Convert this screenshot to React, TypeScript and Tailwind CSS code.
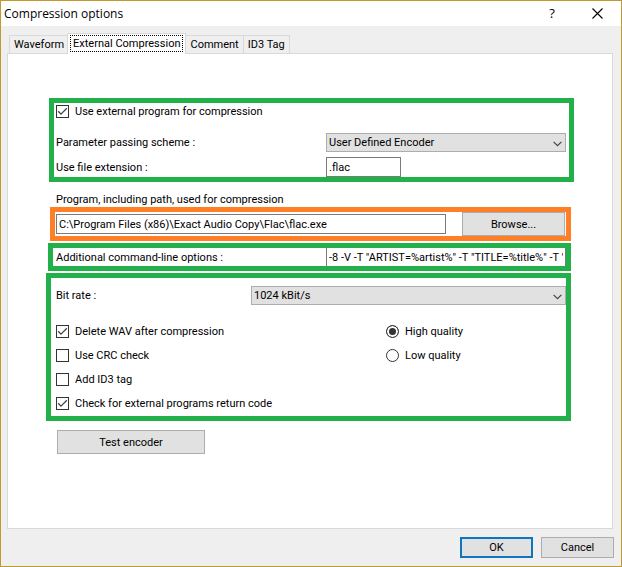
import { useState } from "react";
import type { ReactNode } from "react";

const TABS = ["Waveform", "External Compression", "Comment", "ID3 Tag"];

const OPTIONS = [
  { id: "delete-wav", label: "Delete WAV after compression", checked: true },
  { id: "crc", label: "Use CRC check", checked: false },
  { id: "id3", label: "Add ID3 tag", checked: false },
  { id: "return-code", label: "Check for external programs return code", checked: true },
];

const QUALITIES = [
  { value: "high", label: "High quality" },
  { value: "low", label: "Low quality" },
];

function Checkbox({ id, label, checked }: { id: string; label: string; checked: boolean }) {
  return (
    <div className="flex items-center gap-1.5">
      <span className="relative size-[13px] shrink-0">
        <input
          id={id}
          type="checkbox"
          defaultChecked={checked}
          className="peer block size-[13px] appearance-none border border-[#333333] bg-white"
        />
        <svg
          viewBox="0 0 13 13"
          className="pointer-events-none absolute inset-0 hidden size-[13px] peer-checked:block"
          fill="none"
          stroke="#444444"
          strokeWidth="1.3"
        >
          <path d="M2.2 6.3 5 9.1 10.8 3.3" />
        </svg>
      </span>
      <label htmlFor={id}>{label}</label>
    </div>
  );
}

function Select({ id, children }: { id: string; children: ReactNode }) {
  return (
    <div className="relative h-[19px] min-w-0 flex-1">
      <select
        id={id}
        className="block h-full w-full appearance-none border border-[#adadad] bg-[#e1e1e1] pr-5 pl-0.5 leading-[17px]"
      >
        {children}
      </select>
      <svg
        viewBox="0 0 9 6"
        className="pointer-events-none absolute top-2 right-1 h-1.5 w-[9px]"
        fill="none"
        stroke="#444444"
        strokeWidth="1.2"
      >
        <path d="M0.6 0.8 4.5 4.7 8.4 0.8" />
      </svg>
    </div>
  );
}

export default function App() {
  const [tab, setTab] = useState("External Compression");

  return (
    <div className="flex min-h-screen flex-col border border-[#c09a30] bg-[#efefef] font-['Roboto','Liberation_Sans',sans-serif] text-[11px] leading-[15px] text-black">
      <header className="flex h-[25px] items-center bg-white pr-[18px] pl-[3px]">
        <h1 className="flex-1 font-['Open_Sans',sans-serif] text-[12px]">Compression options</h1>
        <button
          type="button"
          aria-label="Help"
          className="mr-[33px] w-3 text-center font-['Open_Sans',sans-serif] text-[13px] font-medium"
        >
          ?
        </button>
        <button type="button" aria-label="Close" className="flex size-3 items-center justify-center">
          <svg viewBox="0 0 11 11" className="size-[11px]" fill="none" stroke="#000000" strokeWidth="1.1">
            <path d="M0.5 0.5 10.5 10.5M10.5 0.5 0.5 10.5" />
          </svg>
        </button>
      </header>

      <div role="tablist" className="flex h-[27px] items-end pl-2">
        {TABS.map((name) => (
          <button
            key={name}
            type="button"
            role="tab"
            aria-selected={tab === name}
            onClick={() => setTab(name)}
            className={
              tab === name
                ? "relative z-10 -mx-px -mb-px h-[21px] border border-b-0 border-[#d9d9d9] bg-white px-0.5 pb-0.5"
                : "-mr-px h-[18px] border border-b-0 border-[#d9d9d9] px-1"
            }
          >
            <span className={tab === name ? "block border border-dotted border-black px-0.5" : ""}>{name}</span>
          </button>
        ))}
      </div>

      <main className="mr-2 ml-1.5 flex-1 border border-[#d9d9d9] bg-white px-[38px] pt-11 pb-6">
        <section className="ml-[3px] border-5 border-[#22b04b] pr-[3px] pl-0.5">
          <div className="flex h-[17px] items-center">
            <Checkbox id="use-external" label="Use external program for compression" checked />
          </div>
          <div className="mt-[13px] flex items-center">
            <label htmlFor="scheme" className="w-[270px]">
              Parameter passing scheme :
            </label>
            <Select id="scheme">
              <option>User Defined Encoder</option>
            </Select>
          </div>
          <div className="mt-[5px] flex h-5 items-center">
            <label htmlFor="extension" className="w-[270px]">
              Use file extension :
            </label>
            <input
              id="extension"
              defaultValue=".flac"
              className="h-5 w-[75px] border border-[#7a7a7a] bg-white px-0.5"
            />
          </div>
        </section>

        <label htmlFor="program" className="mt-2.5 ml-2.5 block">
          Program, including path, used for compression
        </label>
        <section className="mr-[3px] ml-1 flex h-[34px] items-center border-5 border-[#ff7f27] px-px">
          <input
            id="program"
            defaultValue="C:\Program Files (x86)\Exact Audio Copy\Flac\flac.exe"
            className="h-5 min-w-0 flex-1 border border-[#7a7a7a] bg-white px-0.5"
          />
          <button type="button" className="ml-4 h-6 w-[103px] border border-[#adadad] bg-[#e1e1e1]">
            Browse...
          </button>
        </section>

        <section className="mt-0.5 mr-[3px] ml-0.5 flex h-7 items-center border-5 border-[#22b04b] pl-[3px]">
          <label htmlFor="cmdline" className="w-[270px]">
            Additional command-line options :
          </label>
          <input
            id="cmdline"
            defaultValue={'-8 -V -T "ARTIST=%artist%" -T "TITLE=%title%" -T "ALBUM=%albumtitle%" %source%'}
            className="h-[18px] min-w-0 flex-1 border-x border-[#7a7a7a] bg-white px-0.5"
          />
        </section>

        <section className="mt-0.5 mr-[3px] border-5 border-[#22b04b] pt-2 pb-px pl-[5px]">
          <div className="flex items-center">
            <label htmlFor="bitrate" className="w-[195px]">
              Bit rate :
            </label>
            <Select id="bitrate">
              <option>1024 kBit/s</option>
            </Select>
          </div>
          <div className="mt-3.5 flex">
            <div className="grid flex-1 auto-rows-[24px]">
              {OPTIONS.map((o) => (
                <Checkbox key={o.id} id={o.id} label={o.label} checked={o.checked} />
              ))}
            </div>
            <div className="grid w-[180px] auto-rows-[24px]">
              {QUALITIES.map((q) => (
                <div key={q.value} className="flex items-center gap-1.5">
                  <input
                    id={q.value}
                    type="radio"
                    name="quality"
                    defaultChecked={q.value === "high"}
                    className="size-[13px] appearance-none rounded-full border border-[#333333] bg-white checked:bg-[#333333] checked:shadow-[inset_0_0_0_2px_#ffffff]"
                  />
                  <label htmlFor={q.value}>{q.label}</label>
                </div>
              ))}
            </div>
          </div>
        </section>

        <button type="button" className="mt-[9px] ml-[11px] h-6 w-[148px] border border-[#adadad] bg-[#e1e1e1]">
          Test encoder
        </button>
      </main>

      <footer className="flex justify-end gap-2 py-2 pr-[7px]">
        <button type="button" className="h-[21px] w-[73px] border-2 border-[#0f75bd] bg-[#e1e1e1]">
          OK
        </button>
        <button type="button" className="h-[21px] w-[73px] border border-[#adadad] bg-[#e1e1e1]">
          Cancel
        </button>
      </footer>
    </div>
  );
}
